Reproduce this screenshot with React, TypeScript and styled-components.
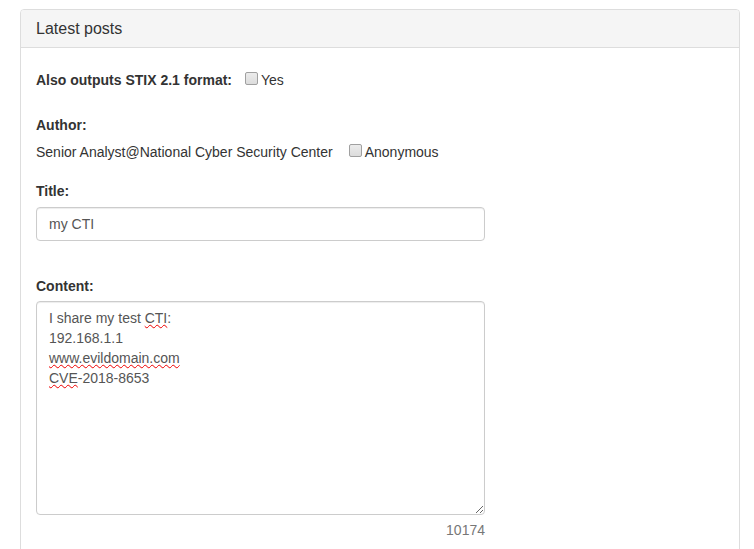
import React from "react";
import styled, { createGlobalStyle } from "styled-components";

const Global = createGlobalStyle`
  html, body { margin: 0; padding: 0; background: #fff; }
  body {
    font-family: "Liberation Sans", Arial, Helvetica, sans-serif;
    font-size: 14px;
    line-height: 20px;
    color: #333;
  }
  * { box-sizing: border-box; }
`;

const Page = styled.div`
  padding: 9px 14px 0 20px;
  height: 549px;
  overflow: hidden;
`;

const Panel = styled.section`
  border: 1px solid #ddd;
  border-radius: 4px;
  background: #fff;
  height: 560px;
`;

const PanelHeading = styled.header`
  background: #f5f5f5;
  border-bottom: 1px solid #ddd;
  border-radius: 3px 3px 0 0;
  padding: 10px 15px;
  font-size: 16px;
  line-height: 17px;
  color: #333;
`;

const PanelBody = styled.div`
  padding: 22px 15px 15px;
  display: flex;
  flex-direction: column;
`;

const Row = styled.div<{ $mt?: number }>`
  display: flex;
  align-items: center;
  height: 20px;
  margin-top: ${(p) => p.$mt ?? 0}px;
`;

const Label = styled.label<{ $mt?: number }>`
  display: block;
  font-weight: bold;
  height: 20px;
  margin-top: ${(p) => p.$mt ?? 0}px;
`;

const InlineLabel = styled.span`
  font-weight: bold;
`;

const Check = styled.label<{ $ml: number }>`
  display: inline-flex;
  align-items: center;
  margin-left: ${(p) => p.$ml}px;
`;

const Box = styled.input.attrs({ type: "checkbox" })`
  appearance: none;
  -webkit-appearance: none;
  margin: 0 3px 3px 0;
  width: 13px;
  height: 13px;
  border: 1px solid #a0a0a0;
  border-radius: 2px;
  background: linear-gradient(#ececec, #dcdcdc);
`;

const Input = styled.input`
  display: block;
  width: 449px;
  height: 34px;
  margin-top: 6px;
  padding: 6px 12px;
  font: inherit;
  color: #555;
  border: 1px solid #ccc;
  border-radius: 4px;
  box-shadow: inset 0 1px 1px rgba(0, 0, 0, 0.075);
  outline: none;
`;

const TextArea = styled.div`
  width: 449px;
  height: 214px;
  margin-top: 5px;
  padding: 6px 12px;
  color: #555;
  border: 1px solid #ccc;
  border-radius: 4px;
  box-shadow: inset 0 1px 1px rgba(0, 0, 0, 0.075);
  overflow: auto;
  resize: both;
`;

const Line = styled.div`
  height: 20px;
`;

const Misspelled = styled.span`
  text-decoration: underline wavy #e00;
  text-decoration-thickness: 1px;
  text-underline-offset: 1px;
  text-decoration-skip-ink: none;
`;

const Counter = styled.div`
  width: 449px;
  margin-top: 5px;
  text-align: right;
  color: #777;
`;

export default function App() {
  return (
    <>
      <Global />
      <Page>
        <Panel>
          <PanelHeading>Latest posts</PanelHeading>
          <PanelBody>
            <Row>
              <InlineLabel>Also outputs STIX 2.1 format:</InlineLabel>
              <Check $ml={13}>
                <Box />
                Yes
              </Check>
            </Row>
            <Label $mt={25}>Author:</Label>
            <Row $mt={7}>
              <span>Senior Analyst@National Cyber Security Center</span>
              <Check $ml={16}>
                <Box />
                Anonymous
              </Check>
            </Row>
            <Label $mt={19}>Title:</Label>
            <Input defaultValue="my CTI" />
            <Label $mt={35}>Content:</Label>
            <TextArea>
              <Line>
                I share my test <Misspelled>CTI</Misspelled>:
              </Line>
              <Line>192.168.1.1</Line>
              <Line>
                <Misspelled>www.evildomain.com</Misspelled>
              </Line>
              <Line>
                <Misspelled>CVE</Misspelled>-2018-8653
              </Line>
            </TextArea>
            <Counter>10174</Counter>
          </PanelBody>
        </Panel>
      </Page>
    </>
  );
}
